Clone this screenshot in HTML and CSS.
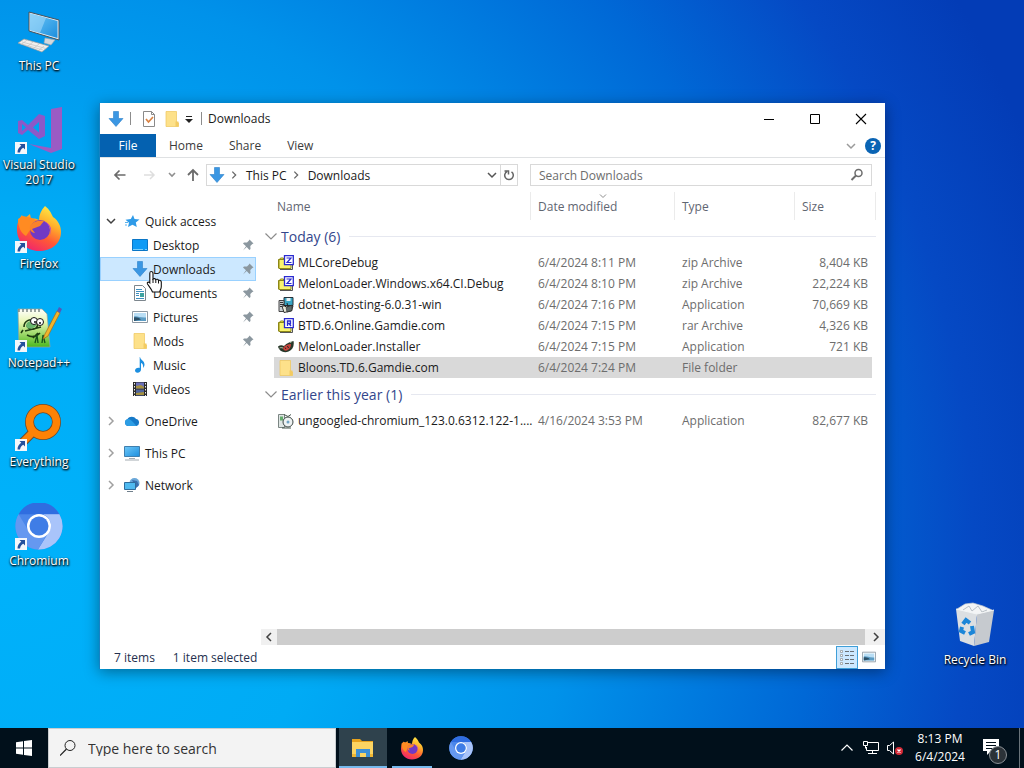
FILE: index.html
```html
<!DOCTYPE html>
<html lang="en">
<head>
  <meta charset="UTF-8">
  <meta name="viewport" content="width=device-width, initial-scale=1.0">
  <title>Downloads</title>
  <link rel="stylesheet" href="styles.css">
</head>
<body>
  <!-- shared icons -->
  <svg class="sprite" aria-hidden="true">
    <defs>
      <linearGradient id="g-screen" x1="0" y1="0" x2="1" y2="1">
        <stop offset="0" stop-color="#6fc8f8"/><stop offset="1" stop-color="#1c8ede"/>
      </linearGradient>
      <linearGradient id="g-fox" x1="0.8" y1="0" x2="0.3" y2="1">
        <stop offset="0" stop-color="#fff04a"/><stop offset="0.35" stop-color="#ffb02a"/>
        <stop offset="0.65" stop-color="#ff5a35"/><stop offset="1" stop-color="#f0246e"/>
      </linearGradient>
      <linearGradient id="g-note" x1="0" y1="0" x2="0" y2="1">
        <stop offset="0" stop-color="#ffffff"/><stop offset="0.35" stop-color="#e6f6b0"/><stop offset="1" stop-color="#4cb81c"/>
      </linearGradient>
    </defs>
    <symbol id="i-down" viewBox="0 0 16 16">
      <path d="M5.500 .5h5v7h4.500L8 15.500 1 7.500h4.500z" fill="#3b97e3" stroke="#2a7fc9" stroke-width=".6"/>
    </symbol>
    <symbol id="i-folder" viewBox="0 0 16 16">
      <path d="M2 .5h10.500v10.500l2 1v3.500H2z" fill="#fde18a" stroke="#eec65c" stroke-width=".7"/>
      <path d="M11.500 10.500h3v5h-3z" fill="#f3cb62"/>
    </symbol>
    <symbol id="i-pin" viewBox="0 0 12 12">
      <path d="M7.500 .5l4 4-1.200.5-2 2 .2 3-1.100 1L4.700 8 1 11.500l3-4.200L1 4.400l1-1 3 .2 2-2z" fill="#8b979f"/>
    </symbol>
    <symbol id="i-chev-down" viewBox="0 0 12 12">
      <path d="M2 4l4 4 4-4" fill="none" stroke="currentColor" stroke-width="1.500"/>
    </symbol>
    <symbol id="i-chev-right" viewBox="0 0 12 12">
      <path d="M4 2l4 4-4 4" fill="none" stroke="currentColor" stroke-width="1.500"/>
    </symbol>
    <symbol id="i-magnifier" viewBox="0 0 16 16">
      <circle cx="9.500" cy="6" r="3.500" fill="none" stroke="currentColor" stroke-width="1.500"/>
      <path d="M7 8.500L2.500 13" stroke="currentColor" stroke-width="2"/>
    </symbol>
    <symbol id="i-picture" viewBox="0 0 16 16">
      <path d="M.5 2.500h15v11H.5z" fill="#fff" stroke="#8d99a3"/>
      <path d="M2 4h12v8H2z" fill="#b9def5"/>
      <path d="M2 7.500c3-1 6 1.500 12 1V12H2z" fill="#5c9cc4"/>
      <path d="M2 8.500c3-.5 5 .5 7 2l-7 1.500z" fill="#2b4f66"/>
    </symbol>
    <symbol id="i-zip" viewBox="0 0 16 16">
      <path d="M.5 4.500h1l1-1.500h3v10h-5z" fill="#f6ee58" stroke="#8d8716"/>
      <path d="M1 4.500h12v9H1z" fill="#faf46e" stroke="#8d8716"/>
      <path d="M2 14.500h12.500V6" fill="none" stroke="#555"/>
      <path d="M6.500.7h8.800v9H6.500z" fill="#fff" stroke="#2a2ad0" stroke-width="1.300"/>
    </symbol>
    <symbol id="i-setup" viewBox="0 0 16 16">
      <path d="M6 .5h9v8H6z" fill="#39a5c4" stroke="#26323a"/>
      <path d="M8.500 1h4v3h-4z" fill="#e9f4f7"/>
      <path d="M1 3.500h5v11H1z" fill="#c8cdd0" stroke="#444"/>
      <path d="M2 5.500h3M2 7.500h3M2 9.500h2" stroke="#333"/>
      <path d="M4 9h11l-1.500 5L6 15.500z" fill="#ececdc" stroke="#222" stroke-width=".9"/>
      <path d="M8 10.500l6-2.500v5.500l-5 1.500z" fill="#5f6b6a" stroke="#222" stroke-width=".6"/>
      <path d="M5 7l3 3M9 6l1 4" stroke="#222"/>
    </symbol>
    <symbol id="i-firefox" viewBox="0 0 48 48">
      <path d="M30 2c5 4 6 7 8 11 6 4 8 10 8 15 0 12-10 19-22 19S2 38 2 26c0-6 1-10 5-15l2 4 6-5 1 5c3-1 6 0 8 1 0-5 2-10 6-14z" fill="url(#g-fox)"/>
      <path d="M3 15l5-3 9 2 7 4 4 4-6 1-7 3-4 6C6 29 3 23 3 15z" fill="#ff8b22"/>
      <circle cx="25" cy="26" r="10" fill="#7139c5"/>
      <path d="M15 22c3-5 9-6 14-5l-4 5-8 3 3 4c-4 0-6-4-5-7z" fill="#f9822b"/>
      <path d="M28 17c7 2 10 8 7 14 2-6-1-11-7-14z" fill="#b13fd1"/>
    </symbol>
    <symbol id="i-chromium" viewBox="0 0 48 48">
      <circle cx="24" cy="24" r="23.500" fill="#4a86ea"/>
      <path d="M3.600 12.200A23.500 23.500 0 0 1 44.400 12.200H24z" fill="#2f6de0"/>
      <path d="M44.400 12.200A23.500 23.500 0 0 1 23 47.500L34 30a12 12 0 0 0-6-17.800z" fill="#a9c4fa"/>
      <path d="M3.600 12.200A23.500 23.500 0 0 0 23 47.500l10-17-19-1z" fill="#6598f0"/>
      <circle cx="24" cy="24" r="12" fill="#fff"/>
      <circle cx="24" cy="24" r="9.500" fill="#3f7de6"/>
    </symbol>
    <symbol id="i-shortcut" viewBox="0 0 12 12">
      <path d="M0 0h12v12H0z" fill="#f4f7fb"/>
      <path d="M4.500 2H10v5.500L8.300 5.800C6.500 6.800 5.500 8 5 10.500H2.500C2.500 7.500 4 5 6.300 3.800z" fill="#24509c"/>
    </symbol>
  </svg>

  <main class="desktop">
    <div class="desktop-icons">
      <a class="desktop-icon" href="#">
        <svg viewBox="0 0 48 48">
          <path d="M14 4l30 8v20L14 23z" fill="#e5eef5" stroke="#46525c"/>
          <path d="M15 5.500l27.500 7.500v17L15 22z" fill="url(#g-screen)"/>
          <path d="M15 5.500l16 4.500-6 15-10-3z" fill="#a4d9f8" opacity=".6"/>
          <path d="M30 30l10 2-4 5-7-2z" fill="#d3d9de" stroke="#9ba4ac" stroke-width=".6"/>
          <path d="M3 35l6-4 25 7-7 6z" fill="#f1efed" stroke="#9b9b9b" stroke-width=".7"/>
          <path d="M7 34l24 6.500M5 35.500l23 6.500M12 32l-5 4M18 34l-5 4M24 36l-5 4M29 38l-5 4" stroke="#c3c3c3" stroke-width=".7"/>
        </svg>
        <span>This PC</span>
      </a>
      <a class="desktop-icon" href="#">
        <svg viewBox="0 0 48 48">
          <path d="M36 2l11-2v42l-11 4-22-9 22 4z" fill="#9a5bc4"/>
          <path d="M24 7l6 2v20l-6 3-11-9-6 5-4-2V14l4-1 6 5zM24 15l-6 5.500 6 5zM7 17v7l4-3.500z" fill="#8c58c8" fill-rule="evenodd"/>
          <use href="#i-shortcut" x="0" y="35" width="12" height="12"/>
        </svg>
        <span>Visual Studio 2017</span>
      </a>
      <a class="desktop-icon" href="#">
        <svg viewBox="0 0 48 48">
          <use href="#i-firefox" x="0" y="-2" width="48" height="48"/>
          <use href="#i-shortcut" x="0" y="35" width="12" height="12"/>
        </svg>
        <span>Firefox</span>
      </a>
      <a class="desktop-icon" href="#">
        <svg viewBox="0 0 48 48">
          <path d="M3 4h24l5 5 3 33H4z" fill="url(#g-note)" stroke="#9aa39a" stroke-width=".7"/>
          <path d="M4 4v3M8 4v3M12 4v3M16 4v3M20 4v3M24 4v3" stroke="#5d6b68" stroke-width="1.200"/>
          <path d="M9 22c0-6 6-9 11-6 4 2 3 7-1 8s-7-1-7-4M10 26l16-4M12 30c5 3 10 1 13-2M8 25l-2 3M18 33l5-5" fill="none" stroke="#1d3c12" stroke-width="1.600"/>
          <path d="M11 21c0-4 4-6 8-4s2 5-1 6-6 1-7-2z" fill="#67b56c"/>
          <circle cx="19" cy="16" r="3.500" fill="#fff" stroke="#111"/><circle cx="25" cy="17" r="3.500" fill="#fff" stroke="#111"/>
          <circle cx="20" cy="17" r="1" fill="#111"/><circle cx="25" cy="18" r="1" fill="#111"/>
          <path d="M20 38l2-8 1 8M27 38l1-8 2 8" fill="none" stroke="#14501a" stroke-width="1.300"/>
          <path d="M28 34l2-5L42 6l3 2-12 23z" fill="#f2b42b" stroke="#a56a16" stroke-width=".7"/>
          <path d="M42 6l2-4 3 2-2 4z" fill="#5458b8"/>
          <use href="#i-shortcut" x="0" y="35" width="12" height="12"/>
        </svg>
        <span>Notepad++</span>
      </a>
      <a class="desktop-icon" href="#">
        <svg viewBox="0 0 48 48">
          <path d="M17 29L6 40" stroke="#6e4a2c" stroke-width="9"/>
          <circle cx="28" cy="18" r="13.500" fill="none" stroke="#6e4a2c" stroke-width="9"/>
          <path d="M18.500 27.500L6 40" stroke="#fd8205" stroke-width="7"/>
          <circle cx="28" cy="18" r="13.500" fill="none" stroke="#fd8205" stroke-width="7.500"/>
          <use href="#i-shortcut" x="0" y="35" width="12" height="12"/>
        </svg>
        <span>Everything</span>
      </a>
      <a class="desktop-icon" href="#">
        <svg viewBox="0 0 48 48">
          <use href="#i-chromium" x="0" y="-1" width="48" height="48"/>
          <use href="#i-shortcut" x="0" y="35" width="12" height="12"/>
        </svg>
        <span>Chromium</span>
      </a>
    </div>

    <a class="desktop-icon recycle-bin" href="#">
      <svg viewBox="0 0 48 48">
        <path d="M6 7l8-5 8-1 10 3 9 4-4 6H10z" fill="#f4f5f6" stroke="#c3c9ce" stroke-width=".7"/>
        <path d="M12 8l6-4 3 5 6-5 4 6 5-2" fill="none" stroke="#b9c0c6"/>
        <path d="M5 7l21 5-3 32-14-5z" fill="#dcdfe2"/>
        <path d="M26 12l17-4-5 32-15 4z" fill="#c6cacf"/>
        <path d="M5 7l21 5 17-4" fill="none" stroke="#f3f5f6"/>
        <g fill="none" stroke="#1c86d8" stroke-width="4">
          <path d="M12 22l3-4 4 3"/><path d="M21 24l1 6-4 2"/><path d="M14 31l-4-2 1-4"/>
        </g>
      </svg>
      <span>Recycle Bin</span>
    </a>

    <section class="window">
      <header class="title-bar">
        <svg class="icon"><use href="#i-down"/></svg>
        <span class="separator"></span>
        <button class="quick-button" aria-label="Properties">
          <svg class="icon" viewBox="0 0 16 16">
            <path d="M2.500.5h8l3 3v12h-11z" fill="#fff" stroke="#8a8a8a"/>
            <path d="M10.500.5v3h3" fill="none" stroke="#8a8a8a"/>
            <path d="M5 8l2.500 3L12 6" fill="none" stroke="#d98243" stroke-width="1.700"/>
          </svg>
        </button>
        <button class="quick-button" aria-label="New folder"><svg class="icon"><use href="#i-folder"/></svg></button>
        <button class="quick-button more" aria-label="Customize">
          <svg viewBox="0 0 8 8"><path d="M1 1.500h6" stroke="#222"/><path d="M0 4h8L4 8z" fill="#222"/></svg>
        </button>
        <span class="separator"></span>
        <h1>Downloads</h1>
        <div class="window-controls">
          <button aria-label="Minimize"><svg viewBox="0 0 12 12"><path d="M1 6.500h10" stroke="#000"/></svg></button>
          <button aria-label="Maximize"><svg viewBox="0 0 12 12"><path d="M1.500 1.500h9v9h-9z" fill="none" stroke="#000"/></svg></button>
          <button aria-label="Close"><svg viewBox="0 0 12 12"><path d="M1 1l10 10M11 1L1 11" stroke="#000" stroke-width="1.100"/></svg></button>
        </div>
      </header>

      <nav class="ribbon">
        <button class="tab file">File</button>
        <button class="tab">Home</button>
        <button class="tab">Share</button>
        <button class="tab">View</button>
        <button class="expand" aria-label="Expand the ribbon"><svg class="chevron"><use href="#i-chev-down"/></svg></button>
        <button class="help" aria-label="Help">?</button>
      </nav>

      <div class="address-row">
        <div class="history">
          <button aria-label="Back"><svg class="icon" viewBox="0 0 16 16"><path d="M13.500 8H3M7.500 3.500L3 8l4.500 4.500" fill="none" stroke="#6b6b6b" stroke-width="1.700"/></svg></button>
          <button aria-label="Forward"><svg class="icon" viewBox="0 0 16 16"><path d="M3 8h10M9 4l4 4-4 4" fill="none" stroke="#dedede" stroke-width="1.500"/></svg></button>
          <button class="recent" aria-label="Recent locations"><svg viewBox="0 0 12 12"><path d="M3 4l3 3 3-3" fill="none" stroke="currentColor" stroke-width="1.600"/></svg></button>
          <button aria-label="Up"><svg class="icon" viewBox="0 0 16 16"><path d="M8 14V3M3 8l5-5 5 5" fill="none" stroke="#6b6b6b" stroke-width="1.800"/></svg></button>
        </div>
        <div class="address-bar">
          <svg class="icon"><use href="#i-down"/></svg>
          <svg class="chevron"><use href="#i-chev-right"/></svg>
          <a href="#">This PC</a>
          <svg class="chevron"><use href="#i-chev-right"/></svg>
          <a href="#">Downloads</a>
          <button class="previous" aria-label="Previous locations"><svg class="chevron"><use href="#i-chev-down"/></svg></button>
          <button class="refresh" aria-label="Refresh">
            <svg viewBox="0 0 12 12"><path d="M8.500 2.800a4.300 4.300 0 1 1-4.500-.3M1.500 2h4v3.500" fill="none" stroke="#666" stroke-width="1.500"/></svg>
          </button>
        </div>
        <div class="search-box">
          <input type="text" placeholder="Search Downloads" aria-label="Search Downloads">
          <svg class="icon"><use href="#i-magnifier"/></svg>
        </div>
      </div>

      <div class="content">
        <nav class="sidebar">
          <div class="tree-group">
            <a class="tree-item open" href="#">
              <svg class="chevron"><use href="#i-chev-down"/></svg>
              <svg class="icon" viewBox="0 0 16 16"><path d="M9 2l1.500 4 5 .5-3.700 3 1 4.500-4.300-2.300L4 14l1-4.300-3.500-3L6.800 6z" fill="#2f9be8"/><path d="M1 9.500h3M1 12h2" stroke="#58b2ee"/></svg>
              <span>Quick access</span>
            </a>
            <a class="tree-item child" href="#">
              <svg class="icon" viewBox="0 0 16 16"><path d="M.5 2.500h15v11H.5z" fill="#0f9bf5" stroke="#0a76c6"/><path d="M1 12.500h10M13 12.500h2" stroke="#7cd0fb"/></svg>
              <span>Desktop</span>
              <svg class="pin"><use href="#i-pin"/></svg>
            </a>
            <a class="tree-item child selected" href="#">
              <svg class="icon"><use href="#i-down"/></svg>
              <span>Downloads</span>
              <svg class="pin"><use href="#i-pin"/></svg>
              <svg class="cursor" viewBox="0 0 18 24">
                <path d="M5 1.500c1.300 0 2 .8 2 2V9c.8-.8 2.400-.5 2.800.6.900-.7 2.400-.3 2.700.9 1-.5 2.800 0 2.800 1.600v4.400c0 2.500-1.300 3.400-1.600 5.500H6.500C5.500 19 3 16.500 1.500 14c-.8-1.500.8-2.700 2.300-1.200V3.500c0-1.200.3-2 1.200-2z" fill="#fff" stroke="#111" stroke-width="1.100"/>
                <path d="M7 9v4M9.800 10v3M12.500 11v2.500" stroke="#111"/>
              </svg>
            </a>
            <a class="tree-item child" href="#">
              <svg class="icon" viewBox="0 0 16 16"><path d="M2.500.5h8l3 3v12h-11z" fill="#fff" stroke="#7d868d"/><path d="M4 4.500h6M4 6.500h8M4 8.500h3M4 10.500h3M4 13.500h8" stroke="#3f8fbf"/><path d="M8 8h4v4H8z" fill="#3fa3a0"/></svg>
              <span>Documents</span>
              <svg class="pin"><use href="#i-pin"/></svg>
            </a>
            <a class="tree-item child" href="#">
              <svg class="icon"><use href="#i-picture"/></svg>
              <span>Pictures</span>
              <svg class="pin"><use href="#i-pin"/></svg>
            </a>
            <a class="tree-item child" href="#">
              <svg class="icon"><use href="#i-folder"/></svg>
              <span>Mods</span>
              <svg class="pin"><use href="#i-pin"/></svg>
            </a>
            <a class="tree-item child" href="#">
              <svg class="icon" viewBox="0 0 16 16"><path d="M8 0c.5 3 4.500 3.500 4.500 7.500 0 1.500-.8 2.500-1.500 3.500.5-3-.5-4.500-2-5v6.500c0 2-1.500 3.200-3.500 3.200-1.600 0-2.500-1-2.500-2.200 0-1.500 1.500-2.700 3.500-2.700.5 0 .9.100 1.200.2V0z" fill="#1c8fe0"/></svg>
              <span>Music</span>
            </a>
            <a class="tree-item child" href="#">
              <svg class="icon" viewBox="0 0 16 16"><path d="M1 1h14v14H1z" fill="#2b2b2b"/><path d="M4 1.500h8v6H4z" fill="#6a70b8"/><path d="M4 8.500h8v6H4z" fill="#52669e"/><path d="M4 5l5-1 3 2v1.500H4zM4 12l8-1v3H4z" fill="#a5913f"/><path d="M2.500 2v13M13.500 2v13" stroke="#eee" stroke-dasharray="1.500 1.500"/></svg>
              <span>Videos</span>
            </a>
          </div>
          <div class="tree-group">
            <a class="tree-item" href="#">
              <svg class="chevron"><use href="#i-chev-right"/></svg>
              <svg class="icon" viewBox="0 0 16 16"><path d="M4 13a3.600 3.600 0 0 1-.5-7A5 5 0 0 1 12 6a3.600 3.600 0 0 1 .5 7z" fill="#1679c8"/><path d="M4 13a3.600 3.600 0 0 1-1-6.800c2-.7 4.500.8 9.500 6.800z" fill="#2d9de4"/></svg>
              <span>OneDrive</span>
            </a>
          </div>
          <div class="tree-group">
            <a class="tree-item" href="#">
              <svg class="chevron"><use href="#i-chev-right"/></svg>
              <svg class="icon" viewBox="0 0 16 16"><path d="M.5 1.500h15v10H.5z" fill="url(#g-screen)" stroke="#3f7fae"/><path d="M5 13.500h6M1 15h14" stroke="#a3abb2"/></svg>
              <span>This PC</span>
            </a>
          </div>
          <div class="tree-group">
            <a class="tree-item" href="#">
              <svg class="chevron"><use href="#i-chev-right"/></svg>
              <svg class="icon" viewBox="0 0 16 16"><circle cx="10.500" cy="6" r="5" fill="#6aa7d8"/><path d="M8 3l5 1 2 4-3 3z" fill="#3a6fae"/><path d="M.5 5.500h11v7H.5z" fill="#4fbaf0" stroke="#2e6c9c"/><path d="M3 14.500h6" stroke="#6f7f8b"/></svg>
              <span>Network</span>
            </a>
          </div>
        </nav>

        <div class="file-pane">
          <table class="files">
            <colgroup>
              <col>
              <col class="col-date">
              <col class="col-type">
              <col class="col-size">
            </colgroup>
            <thead>
              <tr>
                <th class="name">Name</th>
                <th class="sorted">Date modified<svg class="sort-mark" viewBox="0 0 8 4"><path d="M1 .5l3 3 3-3" fill="none" stroke="#8c8c8c"/></svg></th>
                <th>Type</th>
                <th>Size</th>
              </tr>
            </thead>
            <tbody>
              <tr class="group">
                <th colspan="4"><div><svg class="chevron" viewBox="0 0 12 12"><path d="M.5 3.500L6 9l5.500-5.500" fill="none" stroke="currentColor" stroke-width="1.200"/></svg><span>Today (6)</span></div></th>
              </tr>
              <tr>
                <td class="name"><div><svg class="icon"><use href="#i-zip"/><path d="M8.500 3h4.500L9 7.500h4.500" fill="none" stroke="#2a2ad0" stroke-width="1.200"/></svg><span>MLCoreDebug</span></div></td>
                <td>6/4/2024 8:11 PM</td>
                <td>zip Archive</td>
                <td class="size">8,404 KB</td>
              </tr>
              <tr>
                <td class="name"><div><svg class="icon"><use href="#i-zip"/><path d="M8.500 3h4.500L9 7.500h4.500" fill="none" stroke="#2a2ad0" stroke-width="1.200"/></svg><span>MelonLoader.Windows.x64.CI.Debug</span></div></td>
                <td>6/4/2024 8:10 PM</td>
                <td>zip Archive</td>
                <td class="size">22,224 KB</td>
              </tr>
              <tr>
                <td class="name"><div><svg class="icon"><use href="#i-setup"/></svg><span>dotnet-hosting-6.0.31-win</span></div></td>
                <td>6/4/2024 7:16 PM</td>
                <td>Application</td>
                <td class="size">70,669 KB</td>
              </tr>
              <tr>
                <td class="name"><div><svg class="icon"><use href="#i-zip"/><path d="M9.500 8V3h3v2.500h-3M11 5.500L13 8" fill="none" stroke="#2a2ad0" stroke-width="1.300"/></svg><span>BTD.6.Online.Gamdie.com</span></div></td>
                <td>6/4/2024 7:15 PM</td>
                <td>rar Archive</td>
                <td class="size">4,326 KB</td>
              </tr>
              <tr>
                <td class="name"><div><svg class="icon" viewBox="0 0 16 16"><path d="M0 7.500c2-1.500 4-1.500 6-.5 3-3 6-4 9.500-5 1 5-1 9-5 10.500C6 14.500 1 12 0 7.500z" fill="#28382a"/><path d="M5 9c2-3 5-4 8-4 0 3-1 5-4 6.500-2 .5-4-.5-4-2.500z" fill="#c9443c"/><path d="M1.500 9c1-.5 2-.5 3.500 0M12 3.500l2-1" stroke="#b9c8b0" fill="none"/><path d="M7 8.500l1 1.500M9.500 7l1 2" stroke="#222"/></svg><span>MelonLoader.Installer</span></div></td>
                <td>6/4/2024 7:15 PM</td>
                <td>Application</td>
                <td class="size">721 KB</td>
              </tr>
              <tr class="selected">
                <td class="name"><div><svg class="icon"><use href="#i-folder"/></svg><span>Bloons.TD.6.Gamdie.com</span></div></td>
                <td>6/4/2024 7:24 PM</td>
                <td>File folder</td>
                <td class="size"></td>
              </tr>
              <tr class="group">
                <th colspan="4"><div><svg class="chevron" viewBox="0 0 12 12"><path d="M.5 3.500L6 9l5.500-5.500" fill="none" stroke="currentColor" stroke-width="1.200"/></svg><span>Earlier this year (1)</span></div></th>
              </tr>
              <tr>
                <td class="name"><div><svg class="icon" viewBox="0 0 16 16"><path d="M.5 1.500h6v13h-6z" fill="#dfe6e4" stroke="#7b8583"/><path d="M2 3.500h3v4H2z" fill="#63ab6d"/><circle cx="10" cy="9" r="5" fill="#eef2f2" stroke="#3d4745"/><circle cx="10" cy="9" r="1.500" fill="#6fa3c4"/><path d="M6 1.500l4 2 3-2M4 15h9" fill="none" stroke="#49594f"/></svg><span>ungoogled-chromium_123.0.6312.122-1....</span></div></td>
                <td>4/16/2024 3:53 PM</td>
                <td>Application</td>
                <td class="size">82,677 KB</td>
              </tr>
            </tbody>
          </table>
          <div class="scrollbar">
            <button class="left" aria-label="Scroll left"><svg class="chevron"><use href="#i-chev-right"/></svg></button>
            <div class="thumb"></div>
            <button aria-label="Scroll right"><svg class="chevron"><use href="#i-chev-right"/></svg></button>
          </div>
        </div>
      </div>

      <footer class="status-bar">
        <span>7 items</span>
        <span>1 item selected</span>
        <div class="view-buttons">
          <button class="active" aria-label="Details view">
            <svg class="icon" viewBox="0 0 16 16"><path d="M1.500 1.500h2v2h-2zM1.500 5.500h2v2h-2zM1.500 9.500h2v2h-2zM1.500 13.500h2v2h-2z" fill="#fff" stroke="#8a8f94" stroke-width=".7"/><path d="M6 2.500h4M11 2.500h4M6 6.500h4M11 6.500h4M6 10.500h4M11 10.500h4M6 14.500h4M11 14.500h4" stroke="#6b7075"/></svg>
          </button>
          <button aria-label="Thumbnail view"><svg class="icon"><use href="#i-picture"/></svg></button>
        </div>
      </footer>
    </section>
  </main>

  <footer class="taskbar">
    <button class="start" aria-label="Start">
      <svg class="icon" viewBox="0 0 16 16"><path d="M0 2.200L7 1.200v6.300H0zM8 1l8-1v7.500H8zM0 8.500h7v6.300l-7-1zM8 8.500h8V16l-8-1z" fill="#fff"/></svg>
    </button>
    <div class="taskbar-search">
      <svg viewBox="0 0 16 16"><circle cx="10" cy="5.500" r="5" fill="none" stroke="#222"/><path d="M6.500 9L0 15.500" stroke="#222" stroke-width="1.200"/></svg>
      <input type="text" placeholder="Type here to search" aria-label="Type here to search">
    </div>
    <div class="tasks">
      <button class="task running current" aria-label="File Explorer">
        <svg viewBox="0 0 24 24"><path d="M1 3h8l2 2h11v4H1z" fill="#e7a21d"/><path d="M1 6h21v15H1z" fill="#fcd462"/><path d="M5 13h14v8h-4v-4H9v4H5z" fill="#3d8fd6"/><path d="M1 18h4v3H1zM19 18h3v3h-3z" fill="#f0b632"/></svg>
      </button>
      <button class="task running" aria-label="Firefox"><svg><use href="#i-firefox"/></svg></button>
      <button class="task" aria-label="Chromium"><svg><use href="#i-chromium"/></svg></button>
    </div>
    <div class="tray">
      <button aria-label="Show hidden icons"><svg class="icon" viewBox="0 0 16 16"><path d="M2.500 10.500L8 5l5.500 5.500" fill="none" stroke="#fff" stroke-width="1.200"/></svg></button>
      <button aria-label="Network"><svg class="icon" viewBox="0 0 16 16"><path d="M5 2.500h10.500v8H3.500V7" fill="none" stroke="#fff"/><path d="M.5 1.500h4v4h-4zM2.500 5.500v3M9.500 10.500v3M5 13.500h9" fill="none" stroke="#fff"/></svg></button>
      <button aria-label="Volume muted"><svg class="icon" viewBox="0 0 16 16"><path d="M.5 5.500h2l4-3.500v12l-4-3.500h-2z" fill="none" stroke="#fff"/><circle cx="12" cy="11" r="4" fill="#d42a37"/><path d="M10.500 9.500l3 3M13.500 9.500l-3 3" stroke="#fff" stroke-width="1.300"/></svg></button>
      <div class="clock">
        <time>8:13 PM</time>
        <time>6/4/2024</time>
      </div>
      <button class="notifications" aria-label="Notifications">
        <svg viewBox="0 0 24 24"><path d="M2 3h16v12h-8l-4 4v-4H2z" fill="#fff"/><path d="M5 6.500h10M5 9.500h10M5 12.500h7" stroke="#01101b"/></svg>
        <span class="count">1</span>
      </button>
      <button class="show-desktop" aria-label="Show desktop"></button>
    </div>
  </footer>
</body>
</html>
```
FILE: styles.css
```css
* {
  box-sizing: border-box;
}
body {
  margin: 0;
  height: 100vh;
  display: flex;
  flex-direction: column;
  overflow: hidden;
  font-family: "Open Sans", "Noto Sans", sans-serif;
  font-size: 12px;
  line-height: 15px;
  color: #1b1b1b;
}
a {
  color: inherit;
  text-decoration: none;
}
button {
  display: flex;
  align-items: center;
  justify-content: center;
  padding: 0;
  border: none;
  background: none;
  font: inherit;
  color: inherit;
}
input {
  min-width: 0;
  padding: 0;
  border: none;
  outline: none;
  background: none;
  font: inherit;
}
svg {
  display: block;
  flex: none;
}
.sprite {
  position: absolute;
  width: 0;
  height: 0;
}
.icon {
  width: 16px;
  height: 16px;
}
.chevron {
  width: 12px;
  height: 12px;
}

/* desktop */
.desktop {
  flex: 1;
  position: relative;
  min-height: 0;
  background: radial-gradient(ellipse 108% 150% at 0% 75%, #00b2fb 0%, #00abf5 30%, #0092ea 52%, #0068d6 74%, #0549c4 88%, #033cb6 100%);
}
.desktop-icons {
  display: flex;
  flex-direction: column;
  width: 78px;
}
.desktop-icon {
  display: flex;
  flex-direction: column;
  align-items: center;
  gap: 2px;
  width: 78px;
  height: 99px;
  padding-top: 8px;
  color: #fff;
  text-align: center;
  text-shadow: 1px 1px 2px #000, 0 1px 2px #000;
}
.desktop-icon svg {
  width: 48px;
  height: 48px;
}
.recycle-bin {
  position: absolute;
  right: 10px;
  bottom: 35px;
}

/* explorer window */
.window {
  position: absolute;
  top: 103px;
  right: 139px;
  bottom: 59px;
  left: 99px;
  display: flex;
  flex-direction: column;
  background: #fff;
  border-left: 1px solid #1682c4;
  box-shadow: 0 3px 14px rgba(0, 0, 0, 0.4);
}
.title-bar {
  display: flex;
  align-items: center;
  height: 31px;
  padding: 0 1px 0 8px;
}
.separator {
  width: 1px;
  height: 13px;
  margin: 0 6px;
  background: #8c8c8c;
}
.quick-button {
  width: 23px;
}
.quick-button.more {
  width: 12px;
}
.quick-button.more svg {
  width: 8px;
  height: 8px;
}
.title-bar h1 {
  margin: 0;
  font-size: 12px;
  font-weight: normal;
}
.window-controls {
  display: flex;
  align-self: stretch;
  margin-left: auto;
}
.window-controls button {
  width: 46px;
}
.window-controls svg {
  width: 12px;
  height: 12px;
}
.ribbon {
  display: flex;
  align-items: stretch;
  height: 24px;
  border-bottom: 1px solid #dfe1e3;
}
.tab {
  padding: 0 13px;
  color: #3b3b3b;
}
.tab.file {
  width: 56px;
  background: #0461b0;
  color: #fff;
}
.expand {
  width: 22px;
  margin-left: auto;
  color: #9a9a9a;
}
.help {
  align-self: center;
  width: 16px;
  height: 16px;
  margin: 0 4px 0 3px;
  border-radius: 50%;
  background: #0a64b4;
  color: #fff;
  font-weight: bold;
}
.address-row {
  display: flex;
  align-items: center;
  height: 34px;
  padding-right: 13px;
}
.history {
  display: flex;
  align-items: center;
  width: 106px;
  padding-left: 5px;
}
.history button {
  width: 29px;
}
.history .recent {
  width: 17px;
  color: #8f8f8f;
}
.recent svg {
  width: 12px;
  height: 12px;
}
.history button:last-child {
  width: 26px;
}
.address-bar {
  flex: 308;
  display: flex;
  align-items: center;
  height: 22px;
  padding-left: 2px;
  border: 1px solid #d9d9d9;
}
.address-bar > .chevron {
  width: 12px;
  height: 10px;
  margin: 0 6px 0 3px;
  color: #666;
}
.address-bar .previous {
  width: 16px;
  margin-left: auto;
  color: #555;
}
.address-bar .refresh {
  align-self: stretch;
  width: 17px;
  border-left: 1px solid #d9d9d9;
}
.refresh svg {
  width: 12px;
  height: 12px;
}
.search-box {
  flex: 326;
  display: flex;
  align-items: center;
  height: 22px;
  margin-left: 12px;
  padding: 0 6px 0 8px;
  border: 1px solid #d9d9d9;
  color: #6d6d6d;
}
.search-box input {
  flex: 1;
}
.search-box input::placeholder {
  color: #6d6d6d;
  opacity: 1;
}
.content {
  flex: 1;
  display: flex;
  min-height: 0;
}

/* navigation tree */
.sidebar {
  width: 156px;
  padding-top: 17px;
}
.tree-group {
  margin-bottom: 8px;
}
.tree-item {
  position: relative;
  display: flex;
  align-items: center;
  gap: 5px;
  height: 24px;
  padding-left: 5px;
}
.tree-item .chevron {
  margin-right: 2px;
  color: #a0a0a0;
}
.tree-item.open .chevron {
  color: #404040;
}
.tree-item.child {
  padding-left: 32px;
}
.tree-item.selected {
  background: #cce8ff;
  outline: 1px solid #99d1ff;
  outline-offset: -1px;
}
.pin {
  width: 12px;
  height: 12px;
  margin: 0 2px 0 auto;
}
.cursor {
  position: absolute;
  z-index: 1;
  top: 13px;
  left: 46px;
  width: 18px;
  height: 24px;
}

/* file list */
.file-pane {
  flex: 1;
  display: flex;
  flex-direction: column;
  min-width: 0;
  padding-left: 5px;
}
.files {
  width: calc(100% - 9px);
  border-collapse: separate;
  border-spacing: 0;
  table-layout: fixed;
  color: #6d6d6d;
}
.col-date {
  width: 144px;
}
.col-type {
  width: 120px;
}
.col-size {
  width: 81px;
}
.files th,
.files td {
  padding: 0 0 0 7px;
  font-weight: normal;
  text-align: left;
  white-space: nowrap;
}
.files thead th {
  position: relative;
  height: 28px;
  border-right: 1px solid #ebebeb;
  color: #5f6672;
}
.files thead .name {
  padding-left: 16px;
}
.sort-mark {
  position: absolute;
  top: 2px;
  left: 50%;
  width: 8px;
  height: 4px;
  margin-left: -4px;
}
.files .group th {
  padding: 0;
}
.group div {
  display: flex;
  align-items: center;
  gap: 4px;
  height: 32px;
  padding-left: 4px;
  font-size: 14px;
  color: #33468c;
}
.group .chevron {
  color: #8c8c8c;
}
.group div::after {
  content: "";
  flex: 1;
  height: 1px;
  margin-left: 5px;
  background: #e6e8f0;
}
.files tbody td {
  height: 21px;
}
.files tbody .name {
  padding-left: 13px;
  color: #1b1b1b;
}
.files .name div {
  display: flex;
  align-items: center;
  gap: 4px;
  height: 21px;
  padding-left: 4px;
}
.files .size {
  padding-right: 4px;
  border-right: 4px solid #fff;
  text-align: right;
}
.files .selected td:not(.name),
.files .selected .name div {
  background: #d9d9d9;
}
.scrollbar {
  display: flex;
  height: 16px;
  margin-top: auto;
  background: #f0f0f0;
}
.scrollbar button {
  width: 18px;
  color: #404040;
}
.scrollbar .left {
  width: 16px;
}
.scrollbar .left svg {
  transform: scaleX(-1);
}
.thumb {
  flex: 1;
  margin-right: 2px;
  background: #cdcdcd;
}
.status-bar {
  display: flex;
  align-items: center;
  gap: 18px;
  height: 24px;
  padding: 0 5px 0 14px;
  color: #24304f;
}
.view-buttons {
  display: flex;
  margin-left: auto;
}
.view-buttons button {
  width: 22px;
  height: 23px;
}
.view-buttons .active {
  border: 1px solid #3f9fd8;
  background: #cce8ff;
}
.view-buttons button:last-child svg {
  width: 14px;
  height: 14px;
}

/* taskbar */
.taskbar {
  display: flex;
  height: 40px;
  background: #01101b;
  color: #fff;
}
.start {
  width: 48px;
}
.taskbar-search {
  display: flex;
  align-items: center;
  gap: 12px;
  width: 288px;
  padding: 0 11px;
  border: 1px solid #c9cdd0;
  background: #f3f3f3;
}
.taskbar-search svg {
  width: 16px;
  height: 16px;
}
.taskbar-search input {
  flex: 1;
  font-size: 14px;
}
.taskbar-search input::placeholder {
  color: #333;
  opacity: 1;
}
.tasks {
  display: flex;
  gap: 1px;
  margin-left: 3px;
}
.task {
  position: relative;
  width: 48px;
}
.task svg {
  width: 24px;
  height: 24px;
}
.task.running::after {
  content: "";
  position: absolute;
  right: 4px;
  bottom: 0;
  left: 4px;
  height: 2px;
  background: #76b9ed;
}
.task.current {
  background: #2f424d;
}
.task.current::after {
  right: 0;
  left: 0;
}
.tray {
  display: flex;
  align-items: stretch;
  margin-left: auto;
}
.tray button {
  width: 24px;
}
.clock {
  display: flex;
  flex-direction: column;
  justify-content: center;
  width: 66px;
  line-height: 18px;
  text-align: center;
}
.tray .notifications {
  position: relative;
  width: 46px;
  padding-right: 6px;
}
.notifications svg {
  width: 24px;
  height: 24px;
}
.count {
  position: absolute;
  right: 12px;
  bottom: 4px;
  width: 18px;
  height: 18px;
  border: 1px solid #8a9095;
  border-radius: 50%;
  background: #2b3238;
  line-height: 16px;
  text-align: center;
}
.tray .show-desktop {
  width: 5px;
  border-left: 1px solid #6a747b;
}
```
